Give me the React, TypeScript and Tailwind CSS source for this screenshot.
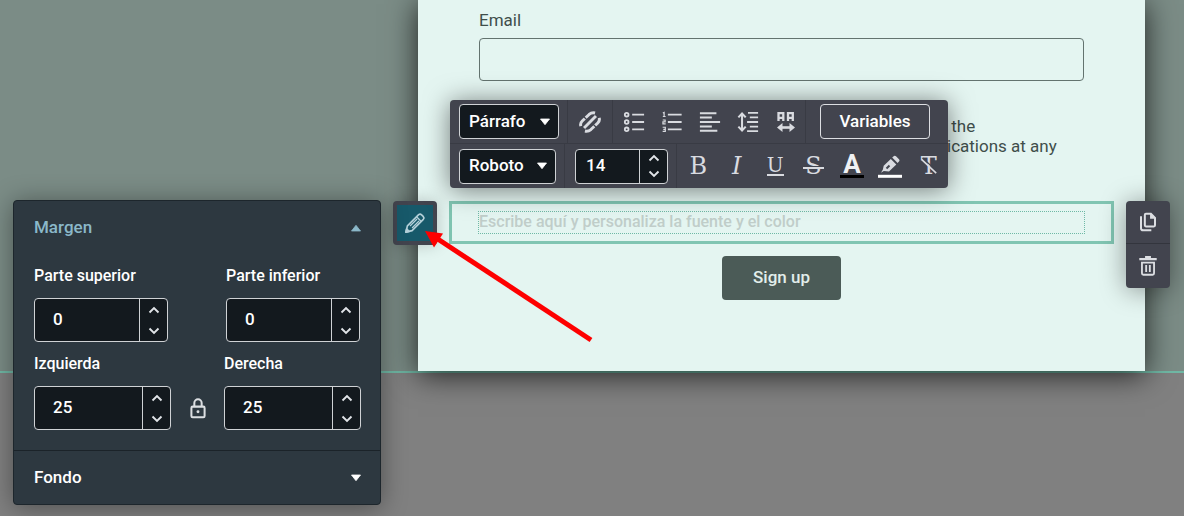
import { useState, type ReactNode } from 'react'

const fieldBox = 'rounded-[4px] border border-[#cfd2d5] bg-[#13191e] text-white'
const toolBtn = 'flex h-9 w-[38px] items-center justify-center'
const fieldLabel = 'text-base font-medium leading-5 text-white'
const glyph = 'font-["DejaVu_Serif",serif] leading-6'

function Caret({ up = false, className = '' }: { up?: boolean; className?: string }) {
  return (
    <svg viewBox="0 0 12 8" className={`h-2 w-3 ${className}`} fill="currentColor" aria-hidden="true">
      <path d={up ? 'M1.5 7 6 1.3 10.500 7z' : 'M1.5 1h9L6 6.7z'} stroke="currentColor" strokeWidth="0.8" strokeLinejoin="round" />
    </svg>
  )
}

function Chevron({ up = false }: { up?: boolean }) {
  return (
    <svg viewBox="0 0 12 8" className="h-2 w-3" fill="none" stroke="#e1e4e8" strokeWidth="1.9" aria-hidden="true">
      <path d={up ? 'M1.5 6.5 6 2l4.5 4.5' : 'M1.5 1.5 6 6l4.5-4.5'} />
    </svg>
  )
}

function NumberField({ id, label, start, className, pad = 'pl-[18px]' }: { id: string; label?: string; start: number; className: string; pad?: string }) {
  const [value, setValue] = useState(start)
  return (
    <div className={`flex ${fieldBox} ${className}`}>
      <input id={id} aria-label={label} inputMode="numeric" value={value} onChange={(e) => setValue(Number(e.target.value) || 0)}
        className={`min-w-0 flex-1 bg-transparent pb-0.5 text-[17px] font-medium leading-5 outline-none ${pad}`} />
      <div className="flex w-7 shrink-0 flex-col border-l border-[#cfd2d5]">
        <button aria-label="+" onClick={() => setValue(value + 1)} className="flex flex-1 items-center justify-center"><Chevron up /></button>
        <button aria-label="-" onClick={() => setValue(value - 1)} className="flex flex-1 items-center justify-center"><Chevron /></button>
      </div>
    </div>
  )
}

function Dropdown({ label, option, className }: { label: string; option: string; className: string }) {
  return (
    <div className={`relative shrink-0 ${className}`}>
      <select aria-label={label} className={`h-full w-full appearance-none pb-0.5 pl-[9px] text-[17px] font-medium leading-5 outline-none ${fieldBox}`}>
        <option>{option}</option>
      </select>
      <Caret className="pointer-events-none absolute right-2 top-1/2 -translate-y-1/2 text-white" />
    </div>
  )
}

function Icon({ children, className = 'h-6 w-6' }: { children: ReactNode; className?: string }) {
  return (
    <svg viewBox="0 0 24 24" className={className} fill="none" stroke="currentColor" strokeWidth="2" aria-hidden="true">
      {children}
    </svg>
  )
}

function Tool({ label, children }: { label: string; children: ReactNode }) {
  return <button aria-label={label} className={toolBtn}>{children}</button>
}

function TextToolbar() {
  return (
    <div className="absolute bottom-full -left-0.5 z-10 mb-4 w-[498px] rounded-[4px] bg-[#42444e] text-[#d9dbe0] shadow-[0_2px_26px_rgba(0,0,0,0.5)]">
      <div className="flex h-11 items-center border-b border-[#393b44] pl-[9px] pr-[18px]">
        <Dropdown label="Estilo" option="Párrafo" className="h-[35px] w-[100px]" />
        <div className="ml-2 flex h-full items-center border-x border-[#393b44] px-[3px]">
          <Tool label="Enlace">
            <Icon className="h-[22px] w-[22px]">
              <g strokeWidth="3.2">
                <path d="M2 16.500Q1 13.500 3.500 11L11 3.800Q14 1.300 17.500 2.200" />
                <path d="M5.500 18.500 18.500 5.500" />
                <path d="M22 7.500Q23 10.500 20.500 13L13 20.200Q10 22.700 6.500 21.800" />
              </g>
              <path d="M5 6l4 4M15 14l4 4" stroke="#42444e" strokeWidth="1.400" />
            </Icon>
          </Tool>
        </div>
        <div className="flex items-center pl-0.5">
          <Tool label="Lista">
            <Icon className="h-[22px] w-[22px]">
              <path d="M10 4h13M10 12h13M10 20h13" />
              <circle cx="4" cy="4" r="2" /><circle cx="4" cy="12" r="2" /><circle cx="4" cy="20" r="2" />
            </Icon>
          </Tool>
          <Tool label="Lista numerada">
            <Icon className="h-[22px] w-[22px]">
              <path d="M7.5 4H22.500M7.5 12H22.500M7.5 20H22.500" />
              <path strokeWidth="1.3" d="M2 2.2 3.4 1.5V6M2 6h3M1.9 9.8h2.6v2.1H2.1v2.2h3M1.8 17.7h2.9v4.6H1.8M2.5 20h2" />
            </Icon>
          </Tool>
          <Tool label="Alinear">
            <Icon className="h-[22px] w-[22px]"><path d="M1 2.500h18M1 7.200h13M1 12h22M1 16.800h13M1 21.500h19" strokeWidth="2.200" /></Icon>
          </Tool>
          <Tool label="Interlineado">
            <Icon className="h-[22px] w-[22px]">
              <path d="M12 2h11M14 7H23M11 12h12M14 17H23M11 22h12" />
              <path d="M5.5 3v18M1.500 7l4-4.300L9.500 7M1.500 17l4 4.300L9.500 17" strokeWidth="2.200" />
            </Icon>
          </Tool>
          <Tool label="Espaciado">
            <Icon>
              <path d="M4.5 11V3.2h4.8V11M4.5 7.8h4.8M14 11V3.2h4.8V11M14 7.8h4.8" strokeWidth="2.3" />
              <path d="M5 17.5h14" strokeWidth="2.6" />
              <path d="M8.5 13 3 17.5 8.5 22zM15.5 13l5.5 4.5-5.5 4.5z" fill="currentColor" stroke="none" />
            </Icon>
          </Tool>
        </div>
        <div className="flex h-full flex-1 items-center justify-end border-l border-[#393b44]">
          <button className="h-[35px] w-[110px] rounded-[4px] border border-[#dcdee2] pb-0.5 text-[17px] font-medium leading-5 text-white">Variables</button>
        </div>
      </div>
      <div className="flex h-11 items-center pl-[9px]">
        <Dropdown label="Fuente" option="Roboto" className="h-[35px] w-[97px]" />
        <div className="ml-2 flex h-full shrink-0 items-center border-x border-[#393b44] pl-[10px] pr-2">
          <NumberField id="size" label="Tamaño" start={14} className="h-[35px] w-[93px]" pad="pl-[10px]" />
        </div>
        <div className="grid flex-1 grid-cols-7 justify-items-center pl-0.5">
          <Tool label="Negrita"><span className={`text-2xl ${glyph}`}>B</span></Tool>
          <Tool label="Cursiva"><span className={`text-2xl italic ${glyph}`}>I</span></Tool>
          <Tool label="Subrayado">
            <span className="flex h-5 w-[17px] items-center justify-center border-b-2 border-current font-['DejaVu_Serif',serif] text-xl leading-4">U</span>
          </Tool>
          <Tool label="Tachado">
            <span className={`relative text-2xl ${glyph}`}>
              S
              <span className="absolute -inset-x-0.5 top-1/2 h-[3px] border-b-2 border-current bg-[#42444e]" />
            </span>
          </Tool>
          <Tool label="Color">
            <span className="flex h-6 w-6 items-center justify-center border-b-[3px] border-black pb-0.5 text-[26px] font-bold leading-5 text-[#f0f1f3]">A</span>
          </Tool>
          <Tool label="Resaltar">
            <Icon>
              <path d="M0 22.3h24" strokeWidth="3" stroke="#fff" />
              <path d="M14.2 3.6 16 2q1-.8 2 .2l3 3q1 1 .2 2L19.6 9zM12.800 5l5.5 5.4-7.3 7-5.2-.5-2.8 1.8 1.9-3.3.8-3.7z" fill="currentColor" stroke="none" />
              <path d="M8.500 14.500 11.500 11.500" stroke="#42444e" />
            </Icon>
          </Tool>
          <Tool label="Quitar formato">
            <span className={`relative text-2xl ${glyph}`}>
              T
              <svg viewBox="0 0 20 20" className="absolute inset-x-0 top-0.5 h-5 w-full" fill="none" aria-hidden="true">
                <path d="M2 0 20 16.500" stroke="#42444e" strokeWidth="1.500" />
                <path d="M1 2l18 17" stroke="currentColor" strokeWidth="2" />
              </svg>
            </span>
          </Tool>
        </div>
      </div>
    </div>
  )
}

function SelectedBlock() {
  return (
    <div className="relative mx-[31px] mt-11 flex h-[43px] items-center border-[3px] border-[#80c5b2] px-[26px]">
      <TextToolbar />
      <input aria-label="Texto" placeholder="Escribe aquí y personaliza la fuente y el color"
        className="h-[23px] w-full border border-dotted border-[#6fb9a6] bg-transparent pb-0.5 text-base font-medium outline-none placeholder:text-[#c0cdc9]" />
      <div className="absolute -top-[3px] right-full mr-[15px] rounded-[4px] bg-[#42444e] p-1 shadow-[0_0_16px_rgba(0,0,0,0.2)]">
        <button aria-label="Editar" className="flex h-9 w-9 items-center justify-center bg-[#17596a] text-[#b4d0d9]">
          <Icon className="h-[22px] w-[22px]">
            <g strokeLinejoin="round" strokeWidth="1.8">
              <path d="M2 22l1.7-6.8L16 2.9q1.6-1.3 3.2.2l1.7 1.7q1.5 1.6.2 3.2L8.8 20.3z" />
              <path d="M13.7 5.2l5.1 5.1M6.6 15.3l7.6-7.6M8.8 17.5l7.6-7.6" strokeWidth="1.4" />
              <path d="M2 22l.9-3.5 2.6 2.6z" fill="currentColor" />
            </g>
          </Icon>
        </button>
      </div>
      <div className="absolute -top-[3px] left-full ml-[15px] w-11 rounded-[4px] bg-[#42444e] text-[#dcdee2] shadow-[0_2px_26px_rgba(0,0,0,0.4)]">
        <button aria-label="Duplicar" className="flex h-[43px] w-full items-center justify-center border-b border-[#33353d]">
          <Icon className="h-5 w-5">
            <path d="M3.6 5v14.5q0 2.5 2.5 2.5H16" strokeWidth="2.4" />
            <path d="M9.5 2.2h6L20.4 7v9q0 1.3-1.3 1.3H9.5q-1.3 0-1.3-1.3V3.5q0-1.3 1.3-1.3z" strokeWidth="2.4" />
            <path d="M14.5 2.2V8h5.9V6.5L16 2.2z" fill="currentColor" stroke="none" />
          </Icon>
        </button>
        <button aria-label="Eliminar" className="flex h-11 w-full items-center justify-center">
          <Icon className="h-[22px] w-[22px]">
            <path d="M2.5 4.5h19M8.8 2.5h6.4" strokeWidth="2.6" />
            <path d="M5.4 8.4h13.2V20q0 1.5-1.5 1.5H6.9q-1.5 0-1.5-1.5zM10 11v7.5M14 11v7.5" />
          </Icon>
        </button>
      </div>
    </div>
  )
}

function SettingsPanel() {
  return (
    <aside className="absolute left-[13px] top-[200px] z-10 w-[368px] rounded-[4px] border border-[#1d262c] bg-[#2d3840] shadow-[0_2px_26px_rgba(0,0,0,0.4)]">
      <button className="flex h-[53px] w-full items-center justify-between pl-5 pr-[18px] text-[17px] font-medium text-[#8bb8c9]">
        Margen
        <Caret up />
      </button>
      <div className="grid grid-cols-[192px_134px] px-5 pt-3">
        <label htmlFor="superior" className={fieldLabel}>Parte superior</label>
        <label htmlFor="inferior" className={fieldLabel}>Parte inferior</label>
        <NumberField id="superior" start={0} className="mt-3 h-11 w-[134px]" />
        <NumberField id="inferior" start={0} className="mt-3 h-11 w-[134px]" />
      </div>
      <div className="grid grid-cols-[137px_53px_137px] items-center border-b border-[#1b2329] px-5 pb-5 pt-3">
        <label htmlFor="izquierda" className={fieldLabel}>Izquierda</label>
        <span />
        <label htmlFor="derecha" className={fieldLabel}>Derecha</label>
        <NumberField id="izquierda" start={25} className="mt-3 h-11" />
        <button aria-label="Vincular" className="mt-3 flex justify-center text-[#dcdfe2]">
          <Icon className="h-[22px] w-[22px]">
            <rect x="4.800" y="10.5" width="14.4" height="11.500" rx="1.4" strokeWidth="2.200" />
            <path d="M8 10V6.500a4 4 0 0 1 8 0v3.500" strokeWidth="2.200" />
            <circle cx="12" cy="16" r="1.6" fill="currentColor" stroke="none" />
          </Icon>
        </button>
        <NumberField id="derecha" start={25} className="mt-3 h-11" />
      </div>
      <button className="flex h-[53px] w-full items-center justify-between pl-5 pr-[18px] text-[17px] font-medium text-white">
        Fondo
        <Caret />
      </button>
    </aside>
  )
}

export default function App() {
  return (
    <div className="relative min-h-screen overflow-hidden bg-[#808080] font-[Roboto,sans-serif]">
      <div className="border-b-2 border-[#70b8a5] bg-[#7b8c86] pl-[418px] pr-[39px]">
        <form onSubmit={(e) => e.preventDefault()} className="bg-[#e4f5f1] pb-[71px] pt-2 shadow-[0_4px_28px_rgba(0,0,0,0.75)]">
          <div className="flex flex-col px-[61px] text-[17px] text-[#3f4e4b]">
            <label htmlFor="email" className="leading-6">Email</label>
            <input id="email" type="email" className="mt-1.5 h-[43px] w-full rounded-[4px] border border-[#63736f] bg-transparent px-3 outline-none" />
            <p className="mt-[35px] whitespace-pre pl-[468px] leading-5">{' the\nications at any'}</p>
          </div>
          <div className="pt-px">
            <SelectedBlock />
          </div>
          <div className="mt-3 flex justify-center">
            <button className="h-11 w-[119px] rounded-[4px] bg-[#4b5b57] text-[17px] font-medium text-[#e2eeeb]">Sign up</button>
          </div>
        </form>
      </div>
      <SettingsPanel />
      {/* pointer from the canvas to the edit button */}
      <svg viewBox="0 0 168 112" className="pointer-events-none absolute left-[425px] top-[231px] z-20 h-[112px] w-[168px]" aria-hidden="true">
        <path d="M12 7.5 166 109" stroke="#fe0000" strokeWidth="5" />
        <path d="M0 0l18 2.5L9 16.5z" fill="#fe0000" />
      </svg>
    </div>
  )
}
